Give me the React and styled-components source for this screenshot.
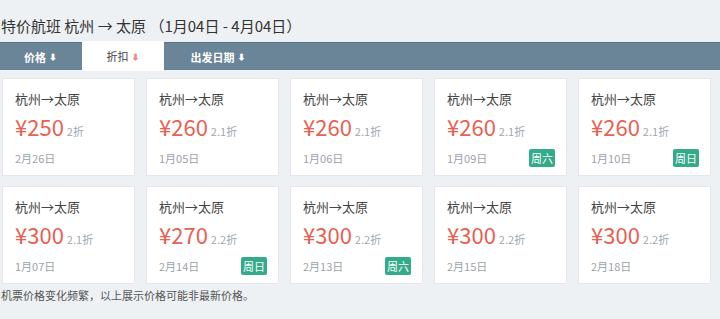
import React, { useState } from "react";
import styled, { createGlobalStyle } from "styled-components";

const GlobalStyle = createGlobalStyle`
  html, body {
    margin: 0;
    padding: 0;
    background: #eef1f4;
    font-family: "Noto Sans CJK SC", "Noto Sans", sans-serif;
  }
`;

const Page = styled.div`
  width: 720px;
  height: 319px;
  overflow: hidden;
  background: #eef1f4;
`;

const Title = styled.h2`
  margin: 0;
  height: 42px;
  font-size: 15px;
  font-weight: normal;
  color: #333;
  padding: 6px 0 0 1px;
  box-sizing: border-box;
  line-height: 40px;
`;

const TabBar = styled.div`
  display: flex;
  height: 28px;
  background: #6a8498;
  border-top: 1px solid #5a7283;
  box-sizing: border-box;
`;

const Tab = styled.div`
  width: ${(p) => p.$w}px;
  display: flex;
  align-items: center;
  justify-content: center;
  gap: 3px;
  font-size: 11px;
  font-weight: ${(p) => (p.$active ? "normal" : "bold")};
  color: ${(p) => (p.$active ? "#444" : "#fff")};
  background: ${(p) => (p.$active ? "#fff" : "transparent")};
  margin-top: ${(p) => (p.$active ? "-2px" : "0")};
  margin-bottom: ${(p) => (p.$active ? "-1px" : "0")};
  margin-right: 1px;
  cursor: pointer;
`;

const Arrow = styled.span`
  font-size: 8px;
  color: ${(p) => (p.$active ? "#f08a84" : "#fff")};
`;

const Grid = styled.div`
  display: grid;
  grid-template-columns: repeat(5, 133px);
  column-gap: 11px;
  row-gap: 10px;
  padding: 8px 0 0 2px;
`;

const Card = styled.div`
  height: 98px;
  background: #fff;
  border: 1px solid #e4e8ec;
  box-sizing: border-box;
  padding: 10px 11px 0 12px;
  display: flex;
  flex-direction: column;
`;

const Route = styled.div`
  font-size: 13px;
  color: #444;
  line-height: 20px;
`;

const PriceRow = styled.div`
  display: flex;
  align-items: baseline;
  gap: 3px;
  height: 32px;
  margin-top: 1px;
`;

const Price = styled.span`
  font-size: 22px;
  color: #e8604f;
  line-height: 32px;
`;

const Discount = styled.span`
  font-size: 11px;
  color: #a0a8b0;
`;

const Bottom = styled.div`
  display: flex;
  justify-content: space-between;
  align-items: center;
  margin-top: 7px;
  height: 18px;
`;

const DateText = styled.span`
  font-size: 11px;
  color: #9aa2aa;
`;

const Badge = styled.span`
  background: #33ab8a;
  color: #fff;
  font-size: 11px;
  line-height: 18px;
  padding: 0 2px;
  border-radius: 2px;
`;

const Note = styled.p`
  margin: 3px 0 0 1px;
  font-size: 11px;
  color: #555;
`;

const flights = [
  { price: 250, off: "2折", date: "2月26日" },
  { price: 260, off: "2.1折", date: "1月05日" },
  { price: 260, off: "2.1折", date: "1月06日" },
  { price: 260, off: "2.1折", date: "1月09日", tag: "周六" },
  { price: 260, off: "2.1折", date: "1月10日", tag: "周日" },
  { price: 300, off: "2.1折", date: "1月07日" },
  { price: 270, off: "2.2折", date: "2月14日", tag: "周日" },
  { price: 300, off: "2.2折", date: "2月13日", tag: "周六" },
  { price: 300, off: "2.2折", date: "2月15日" },
  { price: 300, off: "2.2折", date: "2月18日" },
];

const tabs = [
  { key: "price", label: "价格", w: 81 },
  { key: "off", label: "折扣", w: 82 },
  { key: "date", label: "出发日期", w: 106 },
];

const App = () => {
  const [active, setActive] = useState("off");

  return (
    <Page>
      <GlobalStyle />
      <Title>特价航班 杭州 → 太原 （1月04日 - 4月04日）</Title>
      <TabBar>
        {tabs.map((t) => (
          <Tab
            key={t.key}
            $w={t.w}
            $active={active === t.key}
            onClick={() => setActive(t.key)}
          >
            {t.label}
            <Arrow $active={active === t.key}>⬇</Arrow>
          </Tab>
        ))}
      </TabBar>
      <Grid>
        {flights.map((f, i) => (
          <Card key={i}>
            <Route>杭州→太原</Route>
            <PriceRow>
              <Price>¥{f.price}</Price>
              <Discount>{f.off}</Discount>
            </PriceRow>
            <Bottom>
              <DateText>{f.date}</DateText>
              {f.tag && <Badge>{f.tag}</Badge>}
            </Bottom>
          </Card>
        ))}
      </Grid>
      <Note>机票价格变化频繁，以上展示价格可能非最新价格。</Note>
    </Page>
  );
};

export default App;
